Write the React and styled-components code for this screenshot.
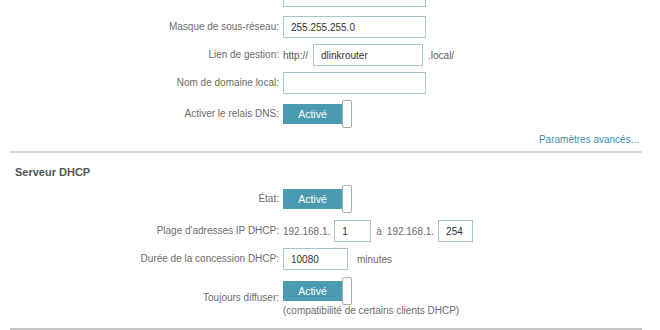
import React from 'react';
import styled, { createGlobalStyle } from 'styled-components';

const GlobalStyle = createGlobalStyle`
  html, body {
    margin: 0;
    padding: 0;
    background: #ffffff;
    overflow: hidden;
  }
  body {
    font-family: "Liberation Sans", Arial, sans-serif;
    font-size: 10px;
    color: #6b6b6b;
  }
`;

const Page = styled.div`
  width: 660px;
  height: 330px;
  overflow: hidden;
  box-sizing: border-box;
  padding: 0 18px 0 10px;
`;

const Section = styled.div`
  display: flex;
  flex-direction: column;
  gap: 6px;
  margin-top: ${(p) => p.$top || 0}px;
`;

const Row = styled.div`
  display: grid;
  grid-template-columns: 269px auto;
  column-gap: 4px;
  align-items: center;
  height: ${(p) => p.$h || 22}px;
  margin-top: ${(p) => p.$mt || 0}px;
`;

const Label = styled.div`
  text-align: right;
  color: #6b6b6b;
  font-size: 10px;
  line-height: 14px;
  white-space: nowrap;
  align-self: ${(p) => (p.$bottom ? 'end' : 'center')};
`;

const Content = styled.div`
  display: flex;
  align-items: center;
  gap: ${(p) => p.$gap ?? 5}px;
  height: 100%;
`;

const Box = styled.input`
  box-sizing: border-box;
  width: ${(p) => p.$w}px;
  height: 22px;
  border: 1px solid #a8c4cc;
  border-radius: 0;
  padding: 0 7px;
  margin: 0;
  font-family: "Liberation Sans", Arial, sans-serif;
  font-size: 10px;
  color: #333;
  background: #fff;
  outline: none;
`;

const Text = styled.span`
  color: ${(p) => p.$dark ? '#5a5a5a' : '#6b6b6b'};
  font-size: 10px;
  white-space: nowrap;
  margin-left: ${(p) => p.$ml || 0}px;
`;

const Toggle = styled.div`
  display: flex;
  align-items: center;
  height: 28px;
`;

const Track = styled.div`
  width: 59px;
  height: 20px;
  background: #4a9bb0;
  color: #fff;
  font-size: 10.5px;
  display: flex;
  align-items: center;
  justify-content: center;
  padding-bottom: 1px;
  box-sizing: border-box;
`;

const Knob = styled.div`
  width: 10px;
  height: 28px;
  box-sizing: border-box;
  background: #fff;
  border: 1px solid #a3b0b5;
  border-radius: 2px;
`;

const Advanced = styled.a`
  align-self: flex-end;
  color: #3d93aa;
  font-size: 10px;
  line-height: 12px;
  margin-right: 3px;
  text-decoration: none;
  cursor: pointer;
`;

const Divider = styled.hr`
  border: none;
  height: 2px;
  background: ${(p) => p.$dark ? '#c4c4c4' : '#d6d6d6'};
  margin: ${(p) => p.$mt}px 0 0 0;
`;

const Heading = styled.h3`
  margin: 12px 0 0 5px;
  font-size: 11px;
  line-height: 14px;
  font-weight: bold;
  color: #555;
`;

const Note = styled.div`
  padding-left: 273px;
  color: #6b6b6b;
  font-size: 10px;
  line-height: 12px;
  margin-top: -6px;
`;

function Switch() {
  return (
    <Toggle>
      <Track>Activé</Track>
      <Knob />
    </Toggle>
  );
}

export default function App() {
  return (
    <Page>
      <GlobalStyle />
      <Section $top={-15}>
        <Row>
          <Label>Adresse IP du réseau local:</Label>
          <Content><Box $w={143} defaultValue="192.168.1.1" readOnly /></Content>
        </Row>
        <Row $mt={3}>
          <Label>Masque de sous-réseau:</Label>
          <Content><Box $w={143} defaultValue="255.255.255.0" readOnly /></Content>
        </Row>
        <Row>
          <Label>Lien de gestion:</Label>
          <Content>
            <Text $dark>http://</Text>
            <Box $w={110} defaultValue="dlinkrouter" readOnly />
            <Text $dark>.local/</Text>
          </Content>
        </Row>
        <Row>
          <Label>Nom de domaine local:</Label>
          <Content><Box $w={143} defaultValue="" readOnly /></Content>
        </Row>
        <Row $h={28}>
          <Label>Activer le relais DNS:</Label>
          <Content><Switch /></Content>
        </Row>
        <Advanced>Paramètres avancés...</Advanced>
      </Section>
      <Divider $mt={5} />
      <Heading>Serveur DHCP</Heading>
      <Section $top={6}>
        <Row $h={28}>
          <Label>État:</Label>
          <Content><Switch /></Content>
        </Row>
        <Row $mt={1}>
          <Label>Plage d'adresses IP DHCP:</Label>
          <Content $gap={4}>
            <Text>192.168.1.</Text>
            <Box $w={37} defaultValue="1" readOnly />
            <Text $ml={1}>à</Text>
            <Text $ml={1}>192.168.1.</Text>
            <Box $w={35} defaultValue="254" readOnly />
          </Content>
        </Row>
        <Row>
          <Label>Durée de la concession DHCP:</Label>
          <Content $gap={9}>
            <Box $w={65} defaultValue="10080" readOnly />
            <Text>minutes</Text>
          </Content>
        </Row>
        <Row $h={28} $mt={1}>
          <Label $bottom>Toujours diffuser:</Label>
          <Content><Switch /></Content>
        </Row>
        <Note>(compatibilité de certains clients DHCP)</Note>
      </Section>
      <Divider $dark $mt={11} />
    </Page>
  );
}
